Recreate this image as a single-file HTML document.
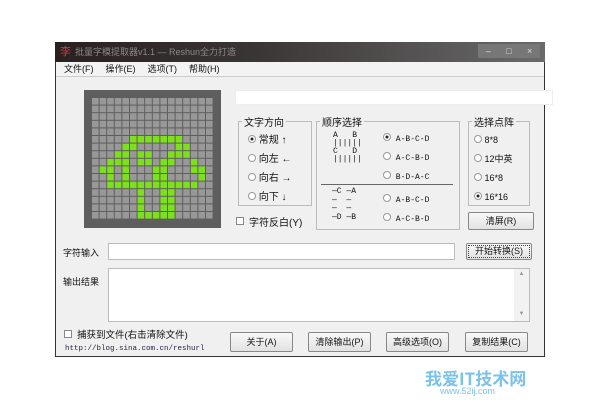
<!DOCTYPE html>
<html><head><meta charset="utf-8"><style>
*{margin:0;padding:0;box-sizing:border-box}
body{width:600px;height:400px;background:#fff;position:relative;overflow:hidden;font-family:"Liberation Sans","Noto Sans CJK SC",sans-serif;font-size:9px;color:#111}
.a{position:absolute}
.win{left:55px;top:42px;width:490px;height:315px;background:#f0f0f0;border:1px solid #333;border-top:none}
.title{left:55px;top:42px;width:490px;height:20px;background:linear-gradient(90deg,#2a2020,#3a3535 40%,#6a6a6a);color:#888;font-size:9px;line-height:20px;padding-left:20px}
.menu{left:56px;top:62px;width:488px;height:15px;background:#f3f3f3;border-bottom:1px solid #ccc;line-height:15px;font-size:9px}
.menu span{margin-left:8px;margin-right:4px}
.in{background:#fff;border:1px solid #bbb}
.grp{border:1px solid #bbb}
.gl{background:#f0f0f0;padding:0 2px;font-size:10px}
.btn{border:1px solid #888;background:linear-gradient(#f8f8f8,#e2e2e2);text-align:center;font-size:9px;border-radius:2px}
.r{width:8px;height:8px;border:1px solid #999;border-radius:50%;background:#fff;display:inline-block}
.rs{background:radial-gradient(#222 30%,#fff 40%)}
.cb{width:8px;height:8px;border:1px solid #888;background:#fff}
.mono{font-family:"Liberation Mono",monospace;font-size:8px}
</style></head><body>
<div class="a win"></div>
<div class="a title"><span style="position:absolute;left:5px;color:#d33;font-size:11px">李</span>批量字模提取器v1.1 — Reshun全力打造</div>
<div class="a" style="left:478px;top:44px;width:62px;height:14px;background:#777;color:#ddd;font-size:9px;line-height:14px;display:flex;justify-content:space-around"><span>–</span><span>□</span><span>×</span></div>
<div class="a menu"><span>文件(F)</span><span>操作(E)</span><span>选项(T)</span><span>帮助(H)</span></div>

<svg class="a" style="left:84px;top:90px" width="137" height="138">
<rect width="137" height="138" fill="#5e5e5e"/>
<g id="g"></g>
</svg>
<script>
var rows={5:[5,6,7,8,9,10,11],6:[4,5,11,12],7:[3,4,6,7,10,11,12],8:[2,3,4,6,7,9,10,13],9:[1,2,4,8,9,13,14],10:[2,4,8,9,14],11:[2,3,4,5,6,7,8,9,10,11,12,13],12:[6,9,10],13:[6,9,10],14:[6,9,10],15:[6,7,8,9,10]};
var s='';for(var r=0;r<16;r++)for(var c=0;c<16;c++){var on=rows[r]&&rows[r].indexOf(c)>=0;s+='<rect x="'+(8+c*7.6)+'" y="'+(8+r*7.6)+'" width="6.6" height="6.6" fill="'+(on?'#7ee01c':'#989898')+'"/>';}
document.getElementById('g').innerHTML=s;
</script>

<div class="a in" style="left:235px;top:90px;width:318px;height:15px;border-color:#eee"></div>

<div class="a grp" style="left:238px;top:121px;width:74px;height:85px"></div>
<div class="a gl" style="left:242px;top:114px">文字方向</div>
<div class="a" style="left:248px;top:131px;font-size:10px;line-height:19px"><div><span class="r rs"></span> 常规 ↑</div><div><span class="r"></span> 向左 ←</div><div><span class="r"></span> 向右 →</div><div><span class="r"></span> 向下 ↓</div></div>
<div class="a cb" style="left:236px;top:217px"></div>
<div class="a" style="left:249px;top:214px;font-size:10px">字符反白(Y)</div>

<div class="a grp" style="left:316px;top:121px;width:144px;height:109px"></div>
<div class="a gl" style="left:320px;top:114px">顺序选择</div>
<div class="a mono" style="left:333px;top:132px;line-height:8px">A&nbsp;&nbsp;&nbsp;B<br>||||||<br>C&nbsp;&nbsp;&nbsp;D<br>||||||</div>
<div class="a" style="left:321px;top:184px;width:132px;height:1px;background:#666"></div>
<div class="a mono" style="left:332px;top:188px;line-height:8.5px">—C —A<br>—&nbsp;&nbsp;—<br>—&nbsp;&nbsp;—<br>—D —B</div>
<div class="a mono" style="left:383px;top:130px;line-height:19px"><div><span class="r rs"></span> A-B-C-D</div><div><span class="r"></span> A-C-B-D</div><div><span class="r"></span> B-D-A-C</div></div>
<div class="a mono" style="left:383px;top:191px;line-height:19px"><div><span class="r"></span> A-B-C-D</div><div><span class="r"></span> A-C-B-D</div></div>

<div class="a grp" style="left:468px;top:121px;width:62px;height:85px"></div>
<div class="a gl" style="left:472px;top:114px">选择点阵</div>
<div class="a" style="left:474px;top:131px;line-height:19px;font-size:9px"><div><span class="r"></span> 8*8</div><div><span class="r"></span> 12中英</div><div><span class="r"></span> 16*8</div><div><span class="r rs"></span> 16*16</div></div>
<div class="a btn" style="left:468px;top:212px;width:66px;height:18px;line-height:16px">清屏(R)</div>

<div class="a" style="left:63px;top:246px">字符输入</div>
<div class="a in" style="left:108px;top:243px;width:347px;height:17px"></div>
<div class="a btn" style="left:466px;top:243px;width:66px;height:17px;line-height:15px;outline:1px dotted #444;outline-offset:-3px">开始转换(S)</div>

<div class="a" style="left:63px;top:275px">输出结果</div>
<div class="a in" style="left:108px;top:268px;width:422px;height:54px"></div>
<div class="a" style="left:514px;top:269px;width:15px;height:52px;background:#f2f2f2;color:#999;font-size:6px;text-align:center;line-height:10px">▲<br><br><br><br>▼</div>

<div class="a cb" style="left:64px;top:330px"></div>
<div class="a" style="left:77px;top:327px;font-size:9.5px">捕获到文件(右击清除文件)</div>
<div class="a mono" style="left:65px;top:345px;color:#224;font-size:7.5px">http://blog.sina.com.cn/reshurl</div>

<div class="a btn" style="left:230px;top:332px;width:63px;height:20px;line-height:18px">关于(A)</div>
<div class="a btn" style="left:308px;top:332px;width:63px;height:20px;line-height:18px">清除输出(P)</div>
<div class="a btn" style="left:386px;top:332px;width:63px;height:20px;line-height:18px">高级选项(O)</div>
<div class="a btn" style="left:465px;top:332px;width:63px;height:20px;line-height:18px">复制结果(C)</div>

<div class="a" style="left:425px;top:365px;color:#5ab4e6;font-size:17px;font-weight:bold;font-family:'Noto Sans CJK SC',sans-serif;opacity:.8">我爱IT技术网</div>
<div class="a" style="left:440px;top:386px;color:#5ab4e6;font-size:9px;opacity:.8">www.52ij.com</div>
</body></html>
